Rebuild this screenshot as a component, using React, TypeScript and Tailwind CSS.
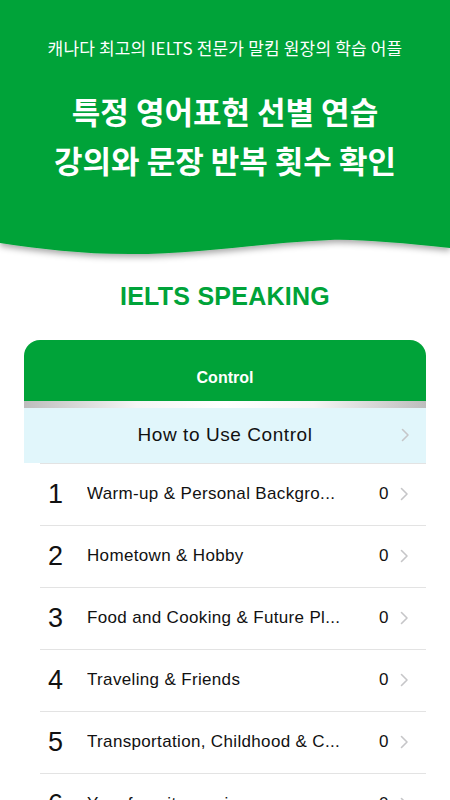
import React from 'react';

const rows = [
  { n: 1, title: 'Warm-up & Personal Backgro...', count: 0 },
  { n: 2, title: 'Hometown & Hobby', count: 0 },
  { n: 3, title: 'Food and Cooking & Future Pl...', count: 0 },
  { n: 4, title: 'Traveling & Friends', count: 0 },
  { n: 5, title: 'Transportation, Childhood & C...', count: 0 },
  { n: 6, title: 'Your favorite music', count: 0 },
];

const Chevron = () => (
  <svg width="9" height="14" viewBox="0 0 9 14" fill="none" className="shrink-0">
    <path d="M1.5 1.5L7 7l-5.5 5.5" stroke="#c6c6c8" strokeWidth="1.6" strokeLinecap="round" strokeLinejoin="round" />
  </svg>
);

export default function App() {
  return (
    <div className="w-[450px] h-[800px] overflow-hidden bg-white font-['Liberation_Sans','Noto_Sans_CJK_KR',sans-serif]">
      {/* header */}
      <div className="bg-[#00a339] pt-[36px] pb-[2px] text-white text-center">
        <p className="text-[17px] leading-[24px] font-['Noto_Sans_CJK_KR',sans-serif] tracking-[0.01em]">
          캐나다 최고의 IELTS 전문가 말킴 원장의 학습 어플
        </p>
        <h1 className="mt-[26px] text-[31px] leading-[49px] font-bold font-['Noto_Sans_CJK_KR',sans-serif]">
          특정 영어표현 선별 연습
          <br />
          강의와 문장 반복 횟수 확인
        </h1>
        <div className="h-[45px]" />
      </div>
      <svg width="450" height="34" viewBox="0 0 450 34" className="block -mt-px">
        <defs>
          <filter id="sh" x="-10%" y="-50%" width="120%" height="200%">
            <feDropShadow dx="0" dy="3" stdDeviation="3" floodColor="#000" floodOpacity="0.35" />
          </filter>
        </defs>
        <path
          d="M0 0H450V18C400 13 360 9 330 10C260 13 200 24 130 24C80 24 40 19 0 13Z"
          fill="#00a339"
          filter="url(#sh)"
        />
      </svg>

      <h2 className="mt-[14px] text-center text-[25px] font-bold text-[#00a339] tracking-[0.01em]">
        IELTS SPEAKING
      </h2>

      {/* card */}
      <div className="mx-[24px] mt-[24px]">
        <div className="bg-[#00a339] rounded-t-[16px] h-[61px] flex items-center justify-center pt-[16px]">
          <span className="text-white font-bold text-[16px]">Control</span>
        </div>
        <div className="h-[7px] bg-[linear-gradient(90deg,#bdbdbd_0%,#f5f5f5_28%,#ffffff_50%,#f5f5f5_72%,#bdbdbd_100%)]" />
        <div className="h-[55px] bg-[#e1f6fb] flex items-center relative">
          <span className="flex-1 text-center text-[19px] text-[#111] tracking-[0.03em]">How to Use Control</span>
          <div className="absolute right-[16px] top-1/2 -translate-y-1/2">
            <Chevron />
          </div>
        </div>
        <div className="bg-white">
          {rows.map((r) => (
            <div key={r.n} className="ml-[16px] border-t border-[#e3e3e3] h-[62px] flex items-center">
              <span className="w-[47px] pl-[8px] text-[27px] text-[#111] font-light">{r.n}</span>
              <span className="flex-1 text-[17px] text-[#111] tracking-[0.02em] whitespace-nowrap overflow-hidden">
                {r.title}
              </span>
              <span className="text-[17px] text-[#111] w-[20px] text-left">{r.count}</span>
              <span className="mr-[17px] ml-[1px]">
                <Chevron />
              </span>
            </div>
          ))}
        </div>
      </div>
    </div>
  );
}
